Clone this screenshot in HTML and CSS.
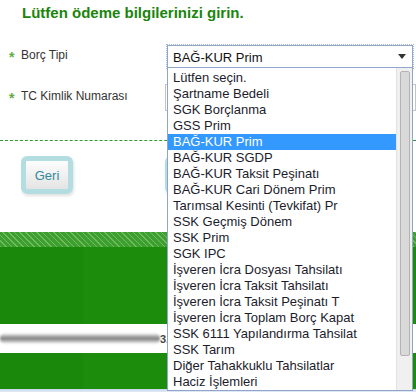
FILE: index.html
```html
<!DOCTYPE html>
<html lang="tr">
<head>
    <meta charset="UTF-8">
    <meta name="viewport" content="width=device-width, initial-scale=1.0">
    <title>Ödeme Bilgileri</title>
    <link rel="stylesheet" href="styles.css">
</head>
<body>

<h2 class="title">Lütfen ödeme bilgilerinizi girin.</h2>

<div class="form">
    <div class="row">
        <label class="label"><span class="req">*</span>Borç Tipi</label>
        <div class="select">
            <span class="select-value">BAĞ-KUR Prim</span>
            <span class="select-arrow"></span>

            <!-- Open option list -->
            <div class="select-list">
                <ul class="options">
                    <li>Lütfen seçin.</li>
                    <li>Şartname Bedeli</li>
                    <li>SGK Borçlanma</li>
                    <li>GSS Prim</li>
                    <li class="selected">BAĞ-KUR Prim</li>
                    <li>BAĞ-KUR SGDP</li>
                    <li>BAĞ-KUR Taksit Peşinatı</li>
                    <li>BAĞ-KUR Cari Dönem Prim</li>
                    <li>Tarımsal Kesinti (Tevkifat) Pr</li>
                    <li>SSK Geçmiş Dönem</li>
                    <li>SSK Prim</li>
                    <li>SGK IPC</li>
                    <li>İşveren İcra Dosyası Tahsilatı</li>
                    <li>İşveren İcra Taksit Tahsilatı</li>
                    <li>İşveren İcra Taksit Peşinatı T</li>
                    <li>İşveren İcra Toplam Borç Kapat</li>
                    <li>SSK 6111 Yapılandırma Tahsilat</li>
                    <li>SSK Tarım</li>
                    <li>Diğer Tahakkuklu Tahsilatlar</li>
                    <li>Haciz İşlemleri</li>
                </ul>
                <div class="scrollbar"><div class="thumb"></div></div>
            </div>
        </div>
    </div>

    <div class="row row-tc">
        <label class="label label-tc"><span class="req">*</span>TC Kimlik Numarası</label>
        <input type="text" class="text-input">
    </div>
</div>

<hr class="divider">

<div class="buttons">
    <button class="btn">Geri</button>
    <!-- hidden behind the open list -->
    <button class="btn btn-next" aria-label="Devam"></button>
</div>

<div class="banner">
    <div class="banner-stripes"></div>
    <div class="banner-green"></div>
    <div class="banner-note">
        <span class="scribble"></span>
        <span class="note-end">3.</span>
    </div>
    <div class="banner-green banner-green-low"></div>
</div>

<div class="statusbar"></div>

</body>
</html>
```

FILE: styles.css
```css
body {
    margin: 0;
    font-family: "Liberation Sans", Arial, sans-serif;
    color: #333;
    background-color: #fff;
    height: 392px;
    overflow: hidden;
}

.title {
    margin: 0;
    padding: 4px 0 0 22px;
    font-size: 15px;
    line-height: 18px;
    font-weight: bold;
    color: #1a850c; /* Green */
}

.form {
    padding: 23px 0 0 9px;
}

.row {
    display: flex;
    align-items: flex-start;
}

.label {
    width: 158px;
    flex-shrink: 0;
    font-size: 12px;
    line-height: 16px;
    padding-top: 2px;
}

.req {
    display: inline-block;
    position: relative;
    top: 3px;
    width: 12px;
    font-size: 14px;
    font-weight: bold;
    line-height: 10px;
    color: #5fae3e;
}

/* Select box */
.select {
    position: relative;
    width: 246px;
    height: 23px;
    box-sizing: border-box;
    border: 1px solid #8fa5ca;
    outline: 1px dotted #a9bbdb;
    padding: 2px 0 0 5px;
    font-size: 13px;
    line-height: 19px;
    color: #111;
}

.select-arrow {
    position: absolute;
    right: 6px;
    top: 8px;
    border-left: 4px solid transparent;
    border-right: 4px solid transparent;
    border-top: 5px solid #333;
}

.select-list {
    position: absolute;
    left: -1px;
    top: 22px;
    width: 246px;
    box-sizing: border-box;
    display: flex;
    border: 1px solid #8fa5ca;
    border-top: none;
    background-color: #fff;
    z-index: 5;
}

.options {
    list-style: none;
    margin: 0;
    padding: 2px 0 0;
    flex: 1;
}

.options li {
    height: 16px;
    line-height: 16px;
    padding-left: 5px;
    white-space: nowrap;
    overflow: hidden;
    color: #1c1c2c;
}

.options li.selected {
    background-color: #3399ff;
    color: #fff;
}

.scrollbar {
    width: 16px;
    box-sizing: border-box;
    padding: 3px 2px 0 3px;
    background-color: #f0f0f0;
    border-left: 1px solid #e2e2e2;
}

.thumb {
    height: 285px;
    box-sizing: border-box;
    border: 1px solid #b3b3b3;
    border-radius: 2px;
    background-color: #d9d9d9;
}

.row-tc {
    margin-top: 16px;
}

.label-tc {
    padding-top: 4px;
}

.text-input {
    margin: 0 0 0 -2px;
    width: 251px;
    height: 27px;
    box-sizing: border-box;
    border: 1px solid #c4c4c4;
    padding: 0;
}

.divider {
    margin: 29px 0 0;
    height: 0;
    border: 0;
    border-top: 1px dashed #2c9a2c;
}

/* Buttons */
.buttons {
    display: flex;
    gap: 92px;
    padding: 15px 0 0 21px;
}

.btn {
    width: 52px;
    height: 38px;
    padding: 0;
    border: 5px solid #b4dde2;
    border-radius: 6px;
    background: linear-gradient(#fdfdfd, #e4e4e4);
    box-shadow: 1px 2px 3px rgba(0, 0, 0, 0.12);
    color: #35899a;
    font-family: "Liberation Sans", Arial, sans-serif;
    font-size: 13px;
    cursor: pointer;
}

.btn-next {
    width: 80px;
}

/* Green banner */
.banner {
    margin-top: 38px;
}

.banner-stripes {
    height: 15px;
    background: repeating-linear-gradient(45deg, #6fbb5e 0 1px, #3d9f30 1px 4px);
}

.banner-green {
    height: 77px;
    background-color: #1b8c0b;
    background-image:
        linear-gradient(100deg, transparent 58%, rgba(255, 255, 255, 0.05) 60%, transparent 63%),
        linear-gradient(90deg, rgba(0, 0, 0, 0.03) 0 20%, transparent 20% 45%, rgba(255, 255, 255, 0.03) 45% 60%, transparent 60%);
}

.banner-green-low {
    height: 36px;
}

.banner-note {
    height: 29px;
    display: flex;
    align-items: center;
    background-color: #fff;
}

.scribble {
    display: block;
    width: 160px;
    height: 11px;
    border-radius: 5px;
    background: linear-gradient(transparent, #b9b9b9 25%, #808080 50%, #b9b9b9 75%, transparent);
    filter: blur(1px);
}

.note-end {
    font-size: 11px;
    font-weight: bold;
    color: #444;
}

.statusbar {
    height: 3px;
    background: linear-gradient(#c7d6ea, #e2eaf5);
}
```
